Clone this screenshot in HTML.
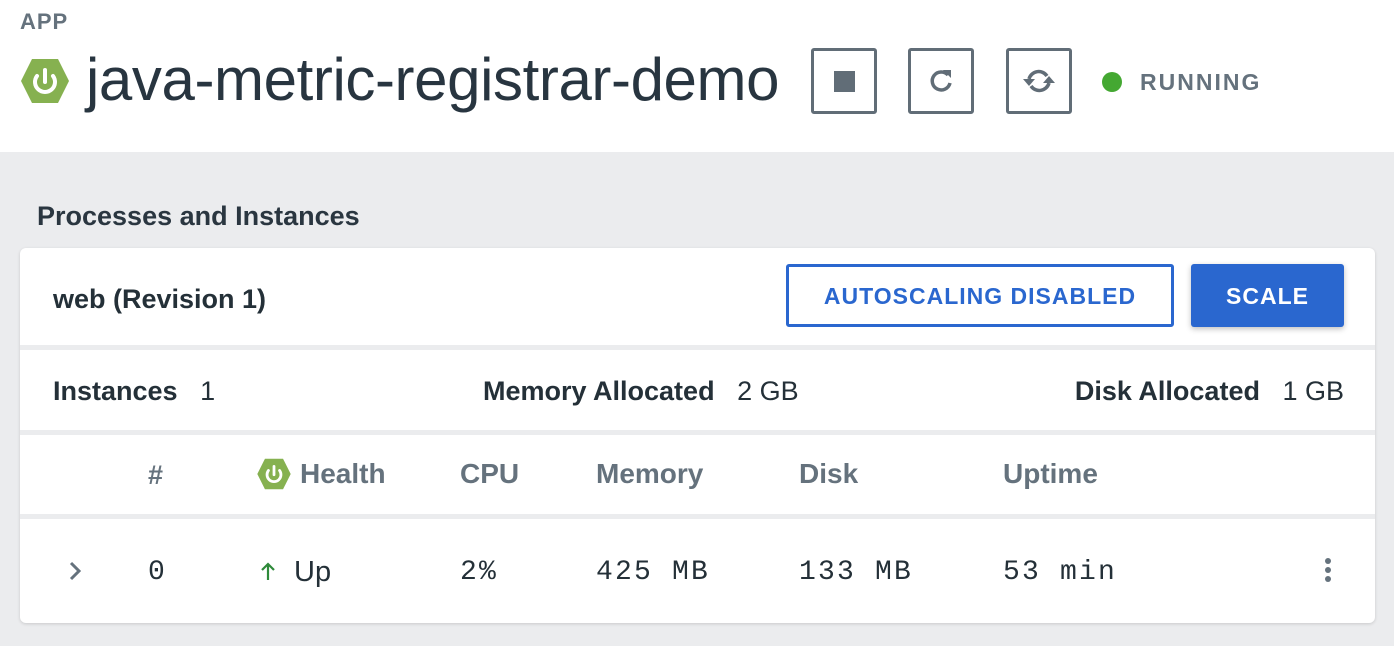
<!DOCTYPE html>
<html><head><meta charset="utf-8"><style>
*{margin:0;padding:0;box-sizing:border-box}
body{width:1394px;height:646px;background:#ebecee;font-family:"Liberation Sans",sans-serif;position:relative;overflow:hidden;color:#243038}
.a{position:absolute;white-space:nowrap}
.top{position:absolute;left:0;top:0;width:1394px;height:152px;background:#fff}
.btn{position:absolute;top:48px;width:66px;height:66px;border:3px solid #616d77;border-radius:3px}
.card{position:absolute;left:20px;top:248px;width:1355px;height:375px;background:#fff;border-radius:6px;box-shadow:0 1px 3px rgba(0,0,0,.15);overflow:hidden}
.div{position:absolute;left:0;width:100%;height:5px;background:#ebecee}
.b{font-weight:bold}
.g{color:#65727d;font-weight:bold}
.m{font-family:"Liberation Mono",monospace;font-size:28px;letter-spacing:2.2px}
</style></head><body>
<div class="top"></div>
<div class="a g" style="left:20px;top:9px;font-size:22px;letter-spacing:1px">APP</div>
<svg class="a" style="left:20px;top:58px" width="50" height="46" viewBox="0 0 50 46"><polygon points="12,1 38,1 49,23 38,45 12,45 1,23" fill="#86b150"/><path d="M17 18 A10 10 0 1 0 33 18" stroke="#fff" stroke-width="4" fill="none" stroke-linecap="round"/><line x1="25" y1="12" x2="25" y2="24" stroke="#fff" stroke-width="4" stroke-linecap="round"/></svg>
<div class="a" style="left:86px;top:45px;font-size:60px;letter-spacing:-0.4px;color:#283540">java-metric-registrar-demo</div>
<div class="btn" style="left:811px"><div class="a" style="left:20px;top:20px;width:21px;height:21px;background:#616d77"></div></div>
<div class="btn" style="left:908px"><svg class="a" style="left:15px;top:15px" width="30" height="30" viewBox="0 0 30 30"><path d="M22 9 A9 9 0 1 0 24 17" stroke="#616d77" stroke-width="3.5" fill="none"/><polygon points="17,4 25,4 25,12" fill="#616d77"/></svg></div>
<div class="btn" style="left:1006px"><svg class="a" style="left:13px;top:15px" width="34" height="30" viewBox="0 0 34 30"><path d="M7 13 A10 10 0 0 1 25 10" stroke="#616d77" stroke-width="3.5" fill="none"/><path d="M27 17 A10 10 0 0 1 9 20" stroke="#616d77" stroke-width="3.5" fill="none"/><polygon points="1,13 13,13 7,20" fill="#616d77"/><polygon points="21,17 33,17 27,10" fill="#616d77"/></svg></div>
<div class="a" style="left:1102px;top:72px;width:20px;height:20px;border-radius:50%;background:#44a832"></div>
<div class="a g" style="left:1140px;top:69px;font-size:23px;letter-spacing:2px">RUNNING</div>
<div class="a b" style="left:37px;top:201px;font-size:27px;color:#2a3640">Processes and Instances</div>
<div class="card">
<div class="a b" style="left:33px;top:36px;font-size:27px">web (Revision 1)</div>
<div class="a" style="left:766px;top:16px;width:388px;height:63px;border:3px solid #2a67cf;border-radius:3px;color:#2a67cf;font-weight:bold;font-size:23px;text-align:center;line-height:59px;letter-spacing:1px">AUTOSCALING DISABLED</div>
<div class="a" style="left:1171px;top:16px;width:153px;height:63px;background:#2a67cf;border-radius:3px;color:#fff;font-weight:bold;font-size:23px;text-align:center;line-height:65px;letter-spacing:1px;box-shadow:0 2px 6px rgba(0,0,0,.25)">SCALE</div>
<div class="div" style="top:97px"></div>
<div class="a" style="left:33px;top:128px;font-size:27px"><b>Instances</b>&nbsp;&nbsp; 1</div>
<div class="a" style="left:463px;top:128px;font-size:27px"><b>Memory Allocated</b>&nbsp;&nbsp; 2 GB</div>
<div class="a" style="right:31px;top:128px;font-size:27px"><b>Disk Allocated</b>&nbsp;&nbsp; 1 GB</div>
<div class="div" style="top:182px"></div>
<div class="a g" style="left:128px;top:212px;font-size:27px">#</div>
<svg class="a" style="left:236px;top:210px" width="36" height="32" viewBox="0 0 50 46"><polygon points="12,1 38,1 49,23 38,45 12,45 1,23" fill="#86b150"/><path d="M17 18 A10 10 0 1 0 33 18" stroke="#fff" stroke-width="4" fill="none" stroke-linecap="round"/><line x1="25" y1="12" x2="25" y2="24" stroke="#fff" stroke-width="4" stroke-linecap="round"/></svg>
<div class="a g" style="left:280px;top:210px;font-size:28px">Health</div>
<div class="a g" style="left:440px;top:210px;font-size:28px">CPU</div>
<div class="a g" style="left:576px;top:210px;font-size:28px">Memory</div>
<div class="a g" style="left:779px;top:210px;font-size:28px">Disk</div>
<div class="a g" style="left:983px;top:210px;font-size:28px">Uptime</div>
<div class="div" style="top:266px"></div>
<svg class="a" style="left:48px;top:312px" width="14" height="22" viewBox="0 0 14 22"><path d="M3 3 L11 11 L3 19" stroke="#65727d" stroke-width="3" fill="none"/></svg>
<div class="a m" style="left:128px;top:309px">0</div>
<svg class="a" style="left:240px;top:313px" width="16" height="20" viewBox="0 0 16 20"><path d="M8 19 V3 M2 9 L8 3 L14 9" stroke="#2e8a3a" stroke-width="2.2" fill="none"/></svg>
<div class="a" style="left:274px;top:308px;font-size:29px">Up</div>
<div class="a m" style="left:440px;top:309px">2%</div>
<div class="a m" style="left:576px;top:309px">425 MB</div>
<div class="a m" style="left:779px;top:309px">133 MB</div>
<div class="a m" style="left:983px;top:309px">53 min</div>
<div class="a" style="left:1305px;top:310px;width:6px;height:6px;border-radius:50%;background:#65727d;box-shadow:0 9px 0 #65727d,0 18px 0 #65727d"></div>
</div>
</body></html>
